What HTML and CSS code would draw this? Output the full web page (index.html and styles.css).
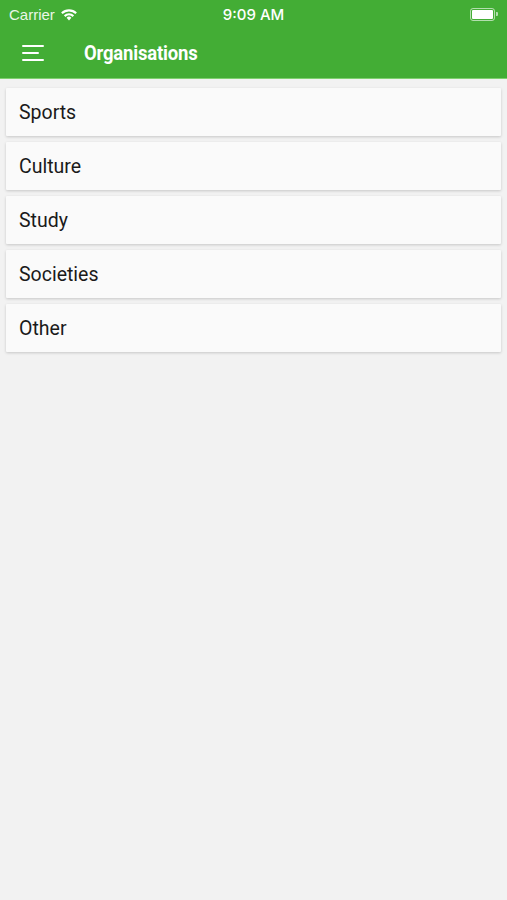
FILE: index.html
```html
<!DOCTYPE html>
<html lang="en">
  <head>
    <meta charset="UTF-8" />
    <meta name="viewport" content="width=device-width, initial-scale=1.0" />
    <title>Organisations</title>
    <link rel="stylesheet" href="styles.css">
  </head>
  <body>
    <div class="header">
      <div class="status-bar">
        <div class="carrier">
          Carrier
          <svg class="wifi" width="18" height="13" viewBox="0 0 18 13">
            <path d="M9 12.5 L6.6 9.8 A3.4 3.4 0 0 1 11.4 9.8 Z" fill="#fff" />
            <path d="M3.9 7.3 A7.2 7.2 0 0 1 14.1 7.3 L12.6 8.9 A5 5 0 0 0 5.4 8.9 Z" fill="#fff" />
            <path d="M1.1 4.5 A11.2 11.2 0 0 1 16.9 4.5 L15.4 6.1 A9 9 0 0 0 2.6 6.1 Z" fill="#fff" />
          </svg>
        </div>
        <div class="time">9:09 AM</div>
        <div class="battery">
          <div class="battery-body"><div class="battery-level"></div></div>
          <div class="battery-tip"></div>
        </div>
      </div>
      <div class="toolbar">
        <div class="menu-icon">
          <span class="line"></span>
          <span class="line short"></span>
          <span class="line"></span>
        </div>
        <h1>Organisations</h1>
      </div>
    </div>

    <div class="list">
      <div class="card">Sports</div>
      <div class="card">Culture</div>
      <div class="card">Study</div>
      <div class="card">Societies</div>
      <div class="card">Other</div>
    </div>
  </body>
</html>
```

FILE: styles.css
```css
body {
  font-family: Roboto, "Liberation Sans", Arial, sans-serif;
  background-color: #f2f2f2;
  margin: 0;
  padding: 0;
  color: #1a1a1a;
}
.header {
  background-color: #43ad35;
  color: white;
  border-bottom: 1px solid #7fd06f;
}
.status-bar {
  height: 28px;
  display: flex;
  align-items: center;
  justify-content: space-between;
  padding: 0 9px 0 9px;
  font-family: "Liberation Sans", Arial, sans-serif;
  font-size: 15px;
}
.carrier {
  display: flex;
  align-items: center;
  gap: 5px;
  width: 120px;
  color: #eaf6e7;
}
.time {
  font-family: Inter, "Liberation Sans", sans-serif;
  font-weight: 500;
  font-size: 15px;
}
.battery {
  width: 120px;
  display: flex;
  justify-content: flex-end;
  align-items: center;
}
.battery-body {
  width: 21px;
  height: 9px;
  border: 1.5px solid rgba(255, 255, 255, 0.6);
  border-radius: 3px;
  padding: 1px;
}
.battery-level {
  width: 100%;
  height: 100%;
  background: white;
  border-radius: 1px;
}
.battery-tip {
  width: 2px;
  height: 4px;
  background: rgba(255, 255, 255, 0.6);
  border-radius: 0 1px 1px 0;
  margin-left: 1px;
}
.toolbar {
  height: 50px;
  display: flex;
  align-items: center;
}
.menu-icon {
  width: 22px;
  margin-left: 22px;
  margin-right: 40px;
  display: flex;
  flex-direction: column;
  gap: 4.5px;
}
.menu-icon .line {
  display: block;
  height: 2.5px;
  width: 22px;
  background: white;
  border-radius: 1px;
}
.menu-icon .short {
  width: 17px;
}
.toolbar h1 {
  margin: 0;
  font-family: Roboto, "Liberation Sans", sans-serif;
  font-size: 21px;
  font-weight: bold;
  letter-spacing: -0.2px;
  transform: scaleX(0.88);
  transform-origin: left center;
}
.list {
  padding: 9px 6px;
  display: flex;
  flex-direction: column;
  gap: 6px;
}
.card {
  background: #fafafa;
  height: 48px;
  display: flex;
  align-items: center;
  padding-left: 13px;
  font-size: 19.5px;
  box-shadow: 0 1px 3px rgba(0, 0, 0, 0.18);
  border-radius: 1px;
}
```
